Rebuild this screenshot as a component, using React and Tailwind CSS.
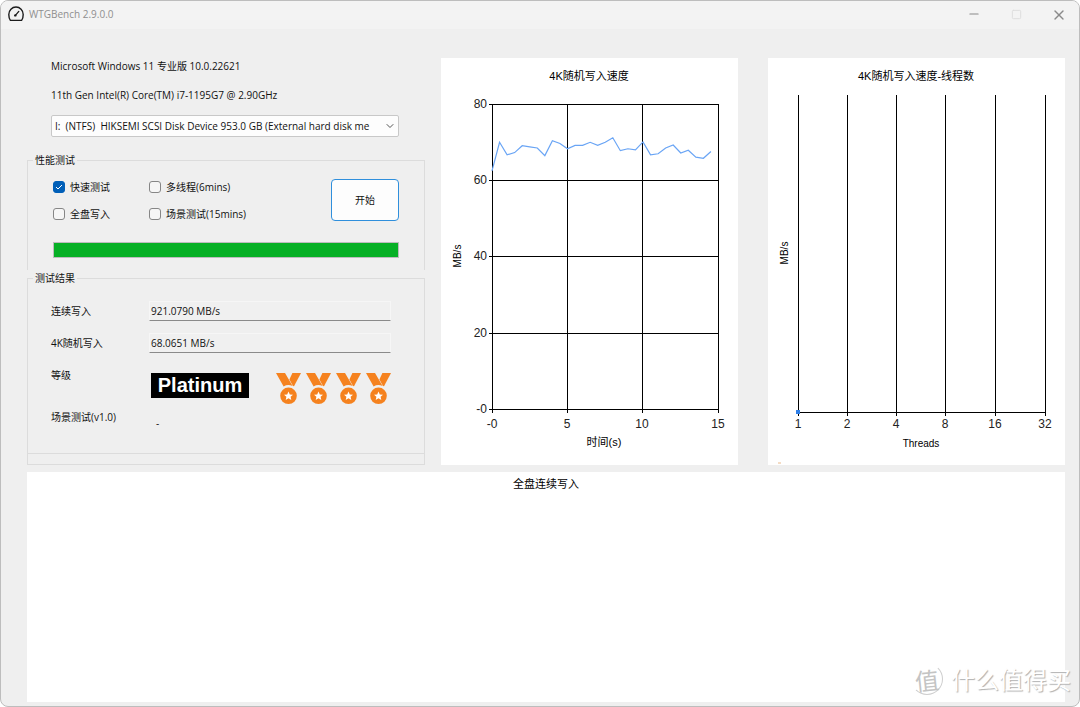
import { ChevronDown, Minus, Square, X } from "lucide-react";
import { useState } from "react";

const UI_FONT = "font-['Open_Sans','Noto_Sans_CJK_SC',sans-serif]";
const CHART_FONT = "font-['Liberation_Sans','Noto_Sans_CJK_SC',sans-serif]";

const initialTests = [
  { id: "quick", label: "快速测试", checked: true },
  { id: "threads", label: "多线程(6mins)", checked: false },
  { id: "full", label: "全盘写入", checked: false },
  { id: "scenario", label: "场景测试(15mins)", checked: false },
];

// MB/s, one sample every half second
const samples = [
  62.5, 70, 66.7, 67.3, 69.1, 68.8, 68.5, 66.5, 70.4, 69.7, 68.3, 69.2, 69.2, 70, 69.2, 70, 71.2, 67.8, 68.3, 68, 70.1, 66.7, 67, 68.5, 69.3, 67.2, 67.9,
  66.1, 65.8, 67.6,
];

const speedTicks = [
  { label: "80", y: 46 },
  { label: "60", y: 122 },
  { label: "40", y: 198 },
  { label: "20", y: 275 },
  { label: "-0", y: 351 },
];

const timeTicks = [
  { label: "-0", x: 51 },
  { label: "5", x: 126 },
  { label: "10", x: 201 },
  { label: "15", x: 277 },
];

const threadTicks = [
  { label: "1", x: 30 },
  { label: "2", x: 79 },
  { label: "4", x: 128 },
  { label: "8", x: 177 },
  { label: "16", x: 227 },
  { label: "32", x: 277 },
];

function GaugeIcon() {
  return (
    <svg className="h-4 w-4" viewBox="0 0 16 16" fill="none" stroke="#1c1c1c" strokeWidth="1.4" aria-hidden="true">
      <path d="M2.4 14.4C1.3 12.9.8 11 .8 8.4A7.2 7.4 0 0 1 15.2 8.4C15.2 11 14.7 12.9 13.6 14.4Z" strokeLinejoin="round" />
      <path d="M7.4 9.4 10.8 5.4" strokeWidth="1.3" strokeLinecap="round" />
      <circle cx="7.3" cy="9.4" r="1.2" fill="#1c1c1c" stroke="none" />
    </svg>
  );
}

function Medal() {
  return (
    <svg className="h-8 w-[25px]" viewBox="0 0 25 32" fill="#f5821f" aria-hidden="true">
      <path d="M0 0h9l7.6 13a9.6 9.6 0 0 0-9 .4z" />
      <path d="M16.4 0H25l-7 13.2-1-.2-3.6-6.4z" />
      <circle cx="12.5" cy="22.8" r="8.3" />
      <path d="m12.5 18.4 1.3 3 3.2.3-2.4 2.1.7 3.2-2.8-1.7-2.8 1.7.7-3.2-2.4-2.1 3.2-.3z" fill="#fff" />
    </svg>
  );
}

function TitleBar() {
  return (
    <header className="flex h-7 items-center justify-between bg-[#f3f3f3] pb-0.5 pl-[7px] pr-[14px]">
      <div className="flex items-center gap-[5px]">
        <GaugeIcon />
        <h1 className="text-[10px] text-[#8f8f8f]">WTGBench 2.9.0.0</h1>
      </div>
      <div className="flex items-center gap-7 text-[#8a8a8a]">
        <button aria-label="最小化" className="grid h-[14px] w-[14px] place-items-center">
          <Minus size={14} strokeWidth={2} />
        </button>
        <button aria-label="最大化" className="grid h-[14px] w-[14px] place-items-center text-[#dcdcdc]" disabled>
          <Square size={11} strokeWidth={2} />
        </button>
        <button aria-label="关闭" className="grid h-[14px] w-[14px] place-items-center">
          <X size={16} strokeWidth={2} />
        </button>
      </div>
    </header>
  );
}

function TestGroup() {
  const [tests, setTests] = useState(initialTests);
  const toggle = (id) => setTests(tests.map((test) => (test.id === id ? { ...test, checked: !test.checked } : test)));

  return (
    <fieldset className="h-[118px] border border-b-0 border-[#dcdcdc] px-[25px]">
      <legend className="-ml-5 h-4 px-0.5 leading-4">性能测试</legend>
      <div className="flex items-start justify-between pt-[11px]">
        <div className="grid grid-cols-[96px_auto] gap-y-[11px]">
          {tests.map((test) => (
            <label key={test.id} className="flex h-4 items-center gap-[5px]">
              <span className="relative grid h-3 w-3 place-items-center">
                <input
                  type="checkbox"
                  checked={test.checked}
                  onChange={() => toggle(test.id)}
                  className="h-3 w-3 appearance-none rounded-[3px] border border-[#868686] bg-[#f6f6f6] checked:border-[#005fb8] checked:bg-[#005fb8]"
                />
                {test.checked ? (
                  <svg className="pointer-events-none absolute h-2 w-2" viewBox="0 0 8 8" fill="none" stroke="#fff" aria-hidden="true">
                    <path d="m1 4 2 2 4-4" />
                  </svg>
                ) : null}
              </span>
              {test.label}
            </label>
          ))}
        </div>
        <button className="h-[42px] w-[68px] rounded-[4px] border border-[#2f8fdc] bg-[#fdfdfd]">开始</button>
      </div>
      <div role="progressbar" aria-label="进度" aria-valuenow={100} className="mt-5 h-4 border border-[#bcbcbc] bg-[#06b025]" />
    </fieldset>
  );
}

function ResultField({ id, label, value }) {
  return (
    <div className="flex h-5 items-center">
      <label htmlFor={id} className="w-[98px]">
        {label}
      </label>
      <input id={id} readOnly value={value} className="h-5 flex-1 border border-b-[#8a8a8a] border-l-[#f6f6f6] border-r-[#f6f6f6] border-t-[#f6f6f6] bg-[#f0f0f0] px-px" />
    </div>
  );
}

function ResultGroup() {
  return (
    <fieldset className="h-[184px] border border-[#dcdcdc] pl-[23px] pr-[33px]">
      <legend className="-ml-[18px] h-4 px-0.5 leading-4">测试结果</legend>
      <div className="flex flex-col gap-3 pt-[15px]">
        <ResultField id="seq" label="连续写入" value="921.0790 MB/s" />
        <ResultField id="rand" label="4K随机写入" value="68.0651 MB/s" />
      </div>
      <div className="flex items-start pt-5">
        <span className="-mt-1.5 w-[100px]">等级</span>
        <strong className="h-[25px] w-[98px] bg-black text-center font-['Liberation_Sans',sans-serif] text-[20px] leading-[25px] text-white">Platinum</strong>
        <div className="ml-auto flex gap-[5px]">
          <Medal />
          <Medal />
          <Medal />
          <Medal />
        </div>
      </div>
      <div className="flex items-start pt-1">
        <span className="w-[105px]">场景测试(v1.0)</span>
        <span className="pt-1.5">-</span>
      </div>
    </fieldset>
  );
}

function RandomWriteChart() {
  const points = samples.map((value, index) => `${51 + index * 7.55},${351 - value * 3.81}`).join(" ");
  return (
    <svg className={`block w-full bg-white ${CHART_FONT}`} viewBox="0 0 297 407" role="img" aria-label="4K随机写入速度">
      <text x="148" y="22" textAnchor="middle" fontSize="11">
        4K随机写入速度
      </text>
      <g stroke="#000" shapeRendering="crispEdges">
        {speedTicks.map((tick) => (
          <line key={tick.label} x1="48" x2="277" y1={tick.y} y2={tick.y} />
        ))}
        {timeTicks.map((tick) => (
          <line key={tick.label} x1={tick.x} x2={tick.x} y1="46" y2="355" />
        ))}
      </g>
      <polyline points={points} fill="none" stroke="#6aa5f5" strokeWidth="1.2" />
      <g fontSize="12" fill="#222">
        {speedTicks.map((tick) => (
          <text key={tick.label} x="46" y={tick.y + 4} textAnchor="end">
            {tick.label}
          </text>
        ))}
        {timeTicks.map((tick) => (
          <text key={tick.label} x={tick.x} y="370" textAnchor="middle">
            {tick.label}
          </text>
        ))}
      </g>
      <text x="163" y="388" textAnchor="middle" fontSize="11">
        时间(s)
      </text>
      <text transform="translate(20 198) rotate(-90)" textAnchor="middle" fontSize="10">
        MB/s
      </text>
    </svg>
  );
}

function ThreadsChart() {
  return (
    <svg className={`block w-full bg-white ${CHART_FONT}`} viewBox="0 0 297 407" role="img" aria-label="4K随机写入速度-线程数">
      <text x="148" y="22" textAnchor="middle" fontSize="11">
        4K随机写入速度-线程数
      </text>
      <g stroke="#000" shapeRendering="crispEdges">
        <line x1="30" x2="277" y1="354" y2="354" />
        {threadTicks.map((tick) => (
          <line key={tick.label} x1={tick.x} x2={tick.x} y1="37" y2="358" />
        ))}
      </g>
      <rect x="28" y="352" width="4" height="4" fill="#2f7fe6" />
      <g fontSize="12" fill="#222" textAnchor="middle">
        {threadTicks.map((tick) => (
          <text key={tick.label} x={tick.x} y="370">
            {tick.label}
          </text>
        ))}
      </g>
      <text x="153" y="389" textAnchor="middle" fontSize="10">
        Threads
      </text>
      <text transform="translate(20 195) rotate(-90)" textAnchor="middle" fontSize="10">
        MB/s
      </text>
      <line x1="10" x2="13" y1="405" y2="405" stroke="#e9b98a" />
    </svg>
  );
}

function Watermark() {
  return (
    <div className="pointer-events-none absolute bottom-[11px] right-2 flex items-center gap-2 font-['Noto_Sans_CJK_SC',sans-serif]">
      <span className="grid h-8 w-8 place-items-center rounded-full border border-white border-b-[#cfcfcf] border-r-[#cfcfcf] text-[24px] leading-8 text-[#c4c4c4]">
        <span className="-rotate-6">值</span>
      </span>
      <span className="text-[24px] leading-8 text-white [text-shadow:1px_1px_1px_#b0b0b0]">什么值得买</span>
    </div>
  );
}

export default function App() {
  return (
    <div className="min-h-screen bg-white">
      <div className={`relative flex min-h-screen flex-col overflow-hidden rounded-lg border border-[#bdbdbd] bg-[#efefef] text-[10px] leading-4 text-[#111] ${UI_FONT}`}>
        <TitleBar />
        <main className="flex flex-1 flex-col gap-[7px] pb-1 pl-[26px] pr-[14px] pt-[29px]">
          <div className="flex items-start">
            <section className="w-[398px] shrink-0">
              <div className="px-6">
                <p>Microsoft Windows 11 专业版 10.0.22621</p>
                <p className="pt-[13px]">11th Gen Intel(R) Core(TM) i7-1195G7 @ 2.90GHz</p>
                <div className="relative mt-3 w-[348px]">
                  <select aria-label="磁盘" className="block h-[22px] w-full appearance-none overflow-hidden rounded-[2px] border border-[#c8c8c8] bg-[#fdfdfd] pl-[3px] pr-4">
                    <option>I:&nbsp; (NTFS)&nbsp; HIKSEMI SCSI Disk Device 953.0 GB (External hard disk me</option>
                  </select>
                  <ChevronDown size={12} strokeWidth={2} className="pointer-events-none absolute right-[3px] top-[5px] text-[#555]" />
                </div>
              </div>
              <div className="pt-[15px]">
                <TestGroup />
                <ResultGroup />
                <div className="h-[11px] border border-t-0 border-[#dcdcdc]" />
              </div>
            </section>
            <div className="ml-4 flex flex-1 gap-[30px]">
              <section className="flex-1">
                <RandomWriteChart />
              </section>
              <section className="flex-1">
                <ThreadsChart />
              </section>
            </div>
          </div>
          <section className="flex-1 bg-white pt-1 text-center">
            <h2 className={`text-[11px] text-black ${CHART_FONT}`}>全盘连续写入</h2>
          </section>
        </main>
        <Watermark />
      </div>
    </div>
  );
}
